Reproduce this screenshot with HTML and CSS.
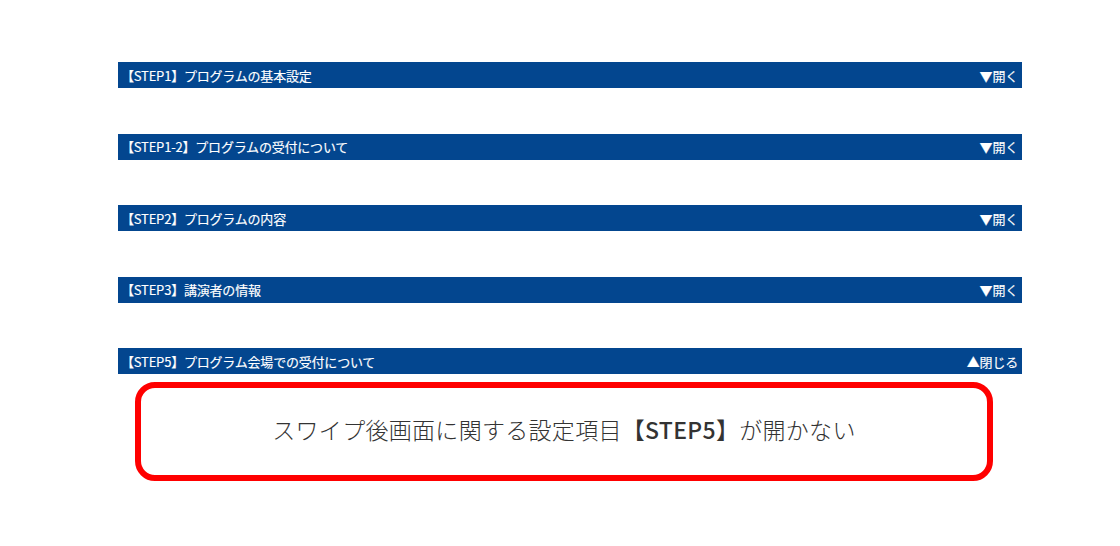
FILE: index.html
```html
<!DOCTYPE html>
<html lang="ja">
<head>
    <meta charset="UTF-8">
    <meta name="viewport" content="width=device-width, initial-scale=1.0">
    <title>設定項目</title>
    <link rel="stylesheet" href="styles.css">
</head>
<body>
    <div class="settings">
        <div class="step-bar">
            <span class="step-title">【STEP1】プログラムの基本設定</span>
            <span class="step-toggle">▼開く</span>
        </div>
        <div class="step-bar">
            <span class="step-title">【STEP1-2】プログラムの受付について</span>
            <span class="step-toggle">▼開く</span>
        </div>
        <div class="step-bar">
            <span class="step-title">【STEP2】プログラムの内容</span>
            <span class="step-toggle">▼開く</span>
        </div>
        <div class="step-bar">
            <span class="step-title">【STEP3】講演者の情報</span>
            <span class="step-toggle">▼開く</span>
        </div>
        <div class="step-bar open">
            <span class="step-title">【STEP5】プログラム会場での受付について</span>
            <span class="step-toggle">▲閉じる</span>
        </div>

        <div class="note-box">
            スワイプ後画面に関する設定項目<b>【STEP5】</b>が開かない
        </div>
    </div>
</body>
</html>
```

FILE: styles.css
```css
/* General */
body {
    margin: 0;
    background-color: #fff;
    font-family: "Noto Sans CJK JP", "Noto Sans", sans-serif;
}

.settings {
    width: 904px;
    margin-left: 118px;
    padding-top: 62px;
}

/* Step bars */
.step-bar {
    display: flex;
    justify-content: space-between;
    align-items: center;
    height: 26px;
    margin-bottom: 45.5px;
    padding: 0 4px 0 3px;
    background-color: #03468f;
    color: #fff;
    font-size: 13px;
    font-weight: 400;
    letter-spacing: -0.2px;
    -webkit-text-stroke: 0.15px #fff;
}

.step-bar.open {
    margin-bottom: 8px;
}

/* Red note */
.note-box {
    box-sizing: border-box;
    width: 858px;
    height: 99px;
    margin-left: 17px;
    padding-bottom: 6px;
    border: 6px solid #ff0000;
    border-radius: 20px;
    display: flex;
    justify-content: center;
    align-items: center;
    font-size: 23px;
    font-weight: 300;
    color: #333;
    letter-spacing: 0.3px;
}

.note-box b {
    font-weight: 500;
}
```
